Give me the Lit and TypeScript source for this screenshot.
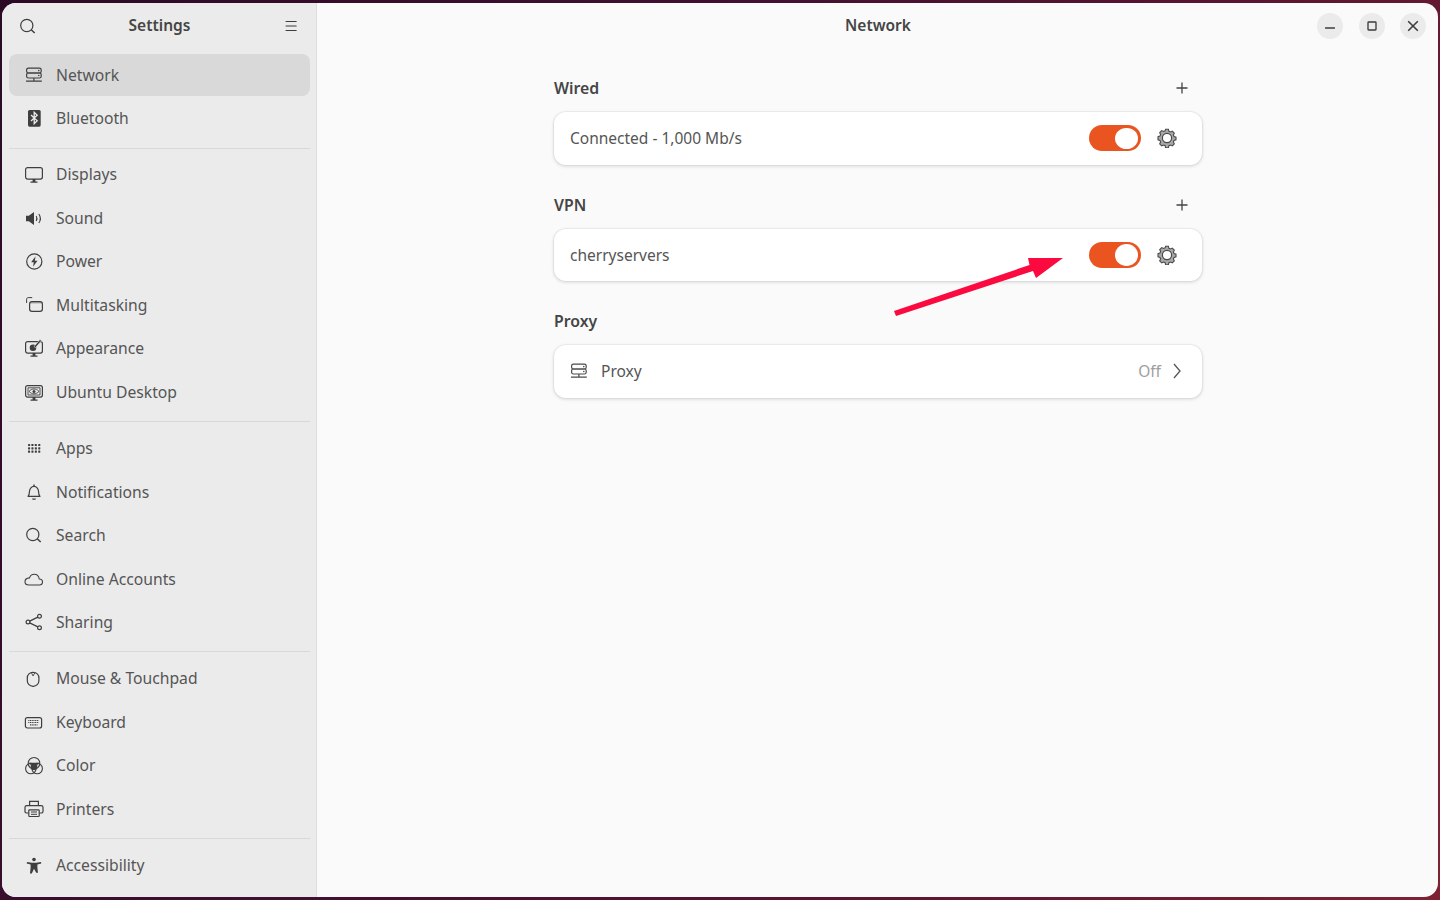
import { LitElement, css, html, svg } from "lit";
import { customElement } from "lit/decorators.js";

const networkGlyph = svg`<g fill="none" stroke="currentColor" stroke-width="1.2"><rect x="2.6" y="3.2" width="14.6" height="4.8" rx="1.8"/><rect x="2.6" y="8" width="14.6" height="5" rx="1.8"/><path d="M2 16.2h15.8M9.900 13v3.200"/></g><circle cx="14.800" cy="5.600" r=".8" fill="currentColor"/><circle cx="14.800" cy="10.500" r=".8" fill="currentColor"/>`;

const monitorBase = svg`<path d="M6.500 18.700h7v-1.200h-2.100V15H8.600v2.500H6.500z" fill="currentColor"/>`;
const monitorFrame = svg`<rect x="1.600" y="3.700" width="16.800" height="11.400" rx="2" fill="none" stroke="currentColor" stroke-width="1.200"/>${monitorBase}`;

const icons: Record<string, unknown> = {
  network: networkGlyph,
  bluetooth: svg`<rect x="4" y="2" width="12.700" height="16.700" rx="1.600" fill="currentColor"/><path d="M7 7l6.200 5.800-3 3V4.200l3 3L7 13" fill="none" stroke="#ebebeb" stroke-width="1.300"/>`,
  displays: monitorFrame,
  sound: svg`<path d="M2 7.800h2.800L10 4v13l-5.200-3.800H2z" fill="currentColor"/><path d="M12.200 8c1 1.600 1 3.400 0 5M14.800 6c2 2.800 2 6.200 0 9" fill="none" stroke="currentColor" stroke-width="1.100"/>`,
  power: svg`<circle cx="10.300" cy="10.500" r="7.600" fill="none" stroke="currentColor" stroke-width="1.200"/><path d="M11.600 5.300l-4.500 6h2.700l-.8 4.400 4.500-6h-2.700z" fill="currentColor"/>`,
  multitasking: svg`<path d="M2.600 8V4.200c0-.9.700-1.600 1.600-1.600h4" fill="none" stroke="currentColor" stroke-width="1"/><rect x="5.600" y="6.600" width="12.800" height="9.800" rx="2.400" fill="none" stroke="currentColor" stroke-width="1.200"/><path d="M6 8.500c0-1.300.8-1.900 2-1.900h8c1.200 0 2 .6 2 1.900z" fill="currentColor" opacity=".35"/>`,
  appearance: svg`${monitorFrame}<circle cx="9" cy="9.700" r="3.300" fill="currentColor"/><path d="M10 8.500l6-7 1.500 1.300-6 7z" fill="currentColor" stroke="#ebebeb" stroke-width=".6"/>`,
  desktop: svg`${monitorFrame}<path d="M4 5.800h12v7.200H4z" fill="none" stroke="currentColor" stroke-width=".9"/><path d="M5 9.400c2.800-3.200 7-3.200 10 0-3 3.200-7.200 3.200-10 0z" fill="#ebebeb" stroke="currentColor" stroke-width=".9"/><circle cx="10" cy="9.400" r="1.500" fill="currentColor"/>`,
  apps: svg`<g fill="currentColor">${[0, 1, 2].map((r) =>
    [0, 1, 2, 3].map((c) => svg`<rect x="${4 + c * 3.4}" y="${6 + r * 3.3}" width="2.100" height="2.100" rx=".4"/>`)
  )}</g>`,
  bell: svg`<path d="M4 14.300c1-1 1.400-2 1.400-4.300 0-3 1.900-5.600 4.600-5.600s4.600 2.600 4.600 5.600c0 2.300.4 3.300 1.400 4.300z" fill="none" stroke="currentColor" stroke-width="1.200" stroke-linejoin="round"/><path d="M8 16.400h4l-.6 1.300H8.600z" fill="currentColor"/><rect x="9.300" y="2.500" width="1.400" height="2" fill="currentColor"/>`,
  search: svg`<circle cx="8.800" cy="9.500" r="6.100" fill="none" stroke="currentColor" stroke-width="1.200"/><path d="M13.200 13.800l3.500 3.200" stroke="currentColor" stroke-width="1.500" fill="none"/>`,
  cloud: svg`<path d="M5 16h10.200c2 0 3.300-1.300 3.300-3s-1.300-3-3.200-3c-.5-2.700-2.500-4.700-5-4.700-2.300 0-4.100 1.400-4.800 3.600C3 9.100 1 10.700 1 12.700S2.700 16 5 16z" fill="none" stroke="currentColor" stroke-width="1.100"/>`,
  sharing: svg`<g fill="none" stroke="currentColor" stroke-width="1.200"><circle cx="4" cy="10" r="1.900"/><circle cx="15.500" cy="4.300" r="1.900"/><circle cx="15.500" cy="15.700" r="1.900"/><path d="M5.700 9.100l8.100-4M5.700 10.900l8.100 4"/></g>`,
  mouse: svg`<rect x="3.300" y="4.300" width="11.600" height="14" rx="5.600" fill="none" stroke="currentColor" stroke-width="1.200"/><path d="M7.300 4.600l1.800 3.400 1.800-3.400" fill="none" stroke="currentColor" stroke-width=".9"/>`,
  keyboard: svg`<rect x="1.400" y="5.600" width="16.200" height="10.400" rx="2" fill="none" stroke="currentColor" stroke-width="1.200"/><path d="M4.300 8.500h10.500M4.300 10.500h10.500M6 12.800h7.500" fill="none" stroke="currentColor" stroke-width="1.200" stroke-dasharray="1.100 .6"/>`,
  color: svg`<g fill="none" stroke="currentColor" stroke-width="1.100"><circle cx="10" cy="8.300" r="5.800"/><circle cx="6.800" cy="13.600" r="5.200"/><circle cx="13.200" cy="13.600" r="5.200"/></g><circle cx="10" cy="11.700" r="3.400" fill="currentColor"/><path d="M4.800 7.800h10.400l-1.400 2H6.200z" fill="currentColor"/>`,
  printer: svg`<g fill="none" stroke="currentColor" stroke-width="1.200"><path d="M5.600 6.500V2.400h8.800v4.100"/><path d="M4.700 14H2.800c-1 0-1.800-.6-1.800-1.600V8.200c0-1 .8-1.600 1.800-1.600h14.400c1 0 1.800.6 1.800 1.600v4.200c0 1-.8 1.600-1.800 1.600h-1.900"/><rect x="4.800" y="10.800" width="10.400" height="6.700" rx=".8"/><path d="M7 13h6M7 15.300h6" stroke-width="1"/></g>`,
  accessibility: svg`<circle cx="10" cy="4.500" r="1.800" fill="currentColor"/><path d="M3 7l4.800.8h4.400L17 7l.3 1.400-3.900 1v3.400l.6 5H12.200L10 13.800l-2.200 4.800H6l.6-5.800V9.400l-3.900-1z" fill="currentColor"/>`,
  menu: svg`<path d="M4.600 5.500h11M4.600 10h11M4.600 14.500h11" fill="none" stroke="currentColor" stroke-width="1.200"/>`,
  plus: svg`<path d="M10 4.500v11M4.500 10h11" fill="none" stroke="currentColor" stroke-width="1.300"/>`,
  gear: svg`<path d="M8.600 1.300h2.800l.5 2 1.500.7 1.900-.9 2 2-.9 1.900.6 1.500 2 .6v2.800l-2 .6-.6 1.500.9 1.900-2 2-1.900-.9-1.500.7-.5 2H8.600l-.5-2-1.500-.7-1.900.9-2-2 .9-1.900-.6-1.500-2-.6V8.600l2-.6.6-1.500-.9-1.900 2-2 1.900.9 1.500-.7z" fill="#a8a8a8" stroke="currentColor" stroke-width="1.100"/><circle cx="10" cy="10" r="4.600" fill="#fff" stroke="currentColor" stroke-width="1.200"/>`,
  chevron: svg`<path d="M7 3l6 7-6 7" fill="none" stroke="currentColor" stroke-width="1.300"/>`,
  minimize: svg`<path d="M3.800 12.500h12.400" fill="none" stroke="currentColor" stroke-width="1.800"/>`,
  maximize: svg`<rect x="5" y="5" width="10" height="10" rx=".8" fill="none" stroke="currentColor" stroke-width="1.700"/>`,
  close: svg`<path d="M4 4l12 12M16 4L4 16" fill="none" stroke="currentColor" stroke-width="2"/>`,
};

const navGroups: [string, string][][] = [
  [["network", "Network"], ["bluetooth", "Bluetooth"]],
  [["displays", "Displays"], ["sound", "Sound"], ["power", "Power"], ["multitasking", "Multitasking"], ["appearance", "Appearance"], ["desktop", "Ubuntu Desktop"]],
  [["apps", "Apps"], ["bell", "Notifications"], ["search", "Search"], ["cloud", "Online Accounts"], ["sharing", "Sharing"]],
  [["mouse", "Mouse & Touchpad"], ["keyboard", "Keyboard"], ["color", "Color"], ["printer", "Printers"]],
  [["accessibility", "Accessibility"]],
];

const icon = (name: string) => html`<svg class="icon" viewBox="0 0 20 20" aria-hidden="true">${icons[name]}</svg>`;

@customElement("app-root")
export class AppRoot extends LitElement {
  static styles = css`
    :host {
      display: block;
      position: relative;
      box-sizing: border-box;
      height: 100vh;
      padding: 3px 2px;
      overflow: hidden;
      background: linear-gradient(115deg, #2c0a26 0%, #3e0f30 35%, #5c1630 70%, #7d2233 100%);
      font-family: "Noto Sans", "Open Sans", sans-serif;
      color: #4f4f4f;
    }
    .window {
      display: flex;
      height: 100%;
      border-radius: 14px;
      overflow: hidden;
      background: #fafafa;
    }
    .icon {
      display: block;
      flex: none;
      width: 20px;
      height: 20px;
    }
    .sidebar {
      flex: none;
      box-sizing: border-box;
      width: 315px;
      padding: 0 6px 0 7px;
      background: #ebebeb;
      border-right: 1px solid #dedede;
    }
    .side-head {
      display: flex;
      align-items: center;
      justify-content: space-between;
      height: 45px;
      padding: 0 9px;
      margin-bottom: 6px;
      color: #3d3d3d;
    }
    .title {
      padding-bottom: 1px;
      font-size: 15.5px;
      font-weight: 600;
      color: #454545;
    }
    .group {
      padding-bottom: 6.6px;
      margin-bottom: 5.1px;
      border-bottom: 1px solid #d8d8d8;
    }
    .group:last-child {
      border-bottom: 0;
    }
    .row {
      display: flex;
      align-items: center;
      gap: 12px;
      height: 41.5px;
      margin-bottom: 2px;
      padding-left: 15px;
      border-radius: 8px;
      font-size: 15.7px;
      color: #555;
    }
    .row .icon {
      color: #3f3f3f;
    }
    .row.active {
      background: #d9d9d9;
    }
    .main {
      flex: 1;
      min-width: 0;
      padding-left: 1px;
    }
    .main-head {
      display: grid;
      grid-template-columns: 1fr auto 1fr;
      align-items: center;
      height: 45px;
    }
    .main-head .title {
      grid-column: 2;
    }
    .controls {
      display: flex;
      justify-content: flex-end;
      gap: 15.5px;
      padding-right: 12px;
    }
    .control {
      display: grid;
      place-items: center;
      width: 26px;
      height: 26px;
      border-radius: 50%;
      background: #ebebeb;
      color: #3d3d3d;
    }
    .control .icon {
      width: 16px;
      height: 16px;
    }
    .content {
      width: 648px;
      margin: 0 auto;
      padding-top: 28px;
    }
    section {
      margin-bottom: 28px;
    }
    .section-head {
      display: flex;
      align-items: center;
      justify-content: space-between;
      height: 24px;
      margin-bottom: 12px;
      padding-right: 10px;
      color: #444;
    }
    .section-title {
      font-size: 15.8px;
      font-weight: 600;
      color: #454545;
    }
    .card {
      display: flex;
      align-items: center;
      box-sizing: border-box;
      height: 52.6px;
      padding: 0 25px 0 16px;
      border-radius: 12px;
      background: #fff;
      box-shadow: 0 0 0 1px rgba(0, 0, 0, 0.03), 0 1px 3px 1px rgba(0, 0, 0, 0.1);
      font-size: 15.5px;
      color: #555;
    }
    .grow {
      flex: 1;
    }
    .toggle {
      display: flex;
      justify-content: flex-end;
      align-items: center;
      box-sizing: border-box;
      width: 52px;
      height: 26px;
      padding-right: 3px;
      margin-right: 16px;
      border-radius: 13px;
      background: #e95420;
    }
    .knob {
      width: 23px;
      height: 21.5px;
      border-radius: 50%;
      background: #fff;
    }
    .gear {
      color: #4a4a4a;
    }
    .proxy-icon {
      margin: 0 12px 0 -1px;
      color: #4a4a4a;
    }
    .off {
      margin-right: 6px;
      color: #9e9e9e;
    }
    .chevron {
      margin-right: -10px;
      color: #555;
    }
    .arrow {
      position: absolute;
      left: 880px;
      top: 240px;
      width: 200px;
      height: 90px;
    }
  `;

  private card(label: string) {
    return html`<div class="card">
      <span class="grow">${label}</span>
      <span class="toggle"><span class="knob"></span></span>
      <span class="gear">${icon("gear")}</span>
    </div>`;
  }

  private head(label: string, add = true) {
    return html`<div class="section-head">
      <span class="section-title">${label}</span>
      ${add ? icon("plus") : null}
    </div>`;
  }

  render() {
    return html`
      <div class="window">
        <aside class="sidebar">
          <div class="side-head">
            ${icon("search")}
            <span class="title">Settings</span>
            ${icon("menu")}
          </div>
          ${navGroups.map(
            (group) => html`<div class="group">
              ${group.map(
                ([name, label]) => html`<div class="row ${name === "network" ? "active" : ""}">
                  ${icon(name)}<span>${label}</span>
                </div>`
              )}
            </div>`
          )}
        </aside>
        <main class="main">
          <header class="main-head">
            <span class="title">Network</span>
            <div class="controls">
              <span class="control">${icon("minimize")}</span>
              <span class="control">${icon("maximize")}</span>
              <span class="control">${icon("close")}</span>
            </div>
          </header>
          <div class="content">
            <section>${this.head("Wired")}${this.card("Connected - 1,000 Mb/s")}</section>
            <section>${this.head("VPN")}${this.card("cherryservers")}</section>
            <section>
              ${this.head("Proxy", false)}
              <div class="card">
                <span class="proxy-icon">${icon("network")}</span>
                <span class="grow">Proxy</span>
                <span class="off">Off</span>
                <span class="chevron">${icon("chevron")}</span>
              </div>
            </section>
          </div>
        </main>
      </div>
      <svg class="arrow" viewBox="0 0 200 90" aria-hidden="true">
        <path d="M14 71L149.500 25L148 18L183 18L156 38L153 31L16 76Z" fill="#fb0a3f"/>
      </svg>
    `;
  }
}
